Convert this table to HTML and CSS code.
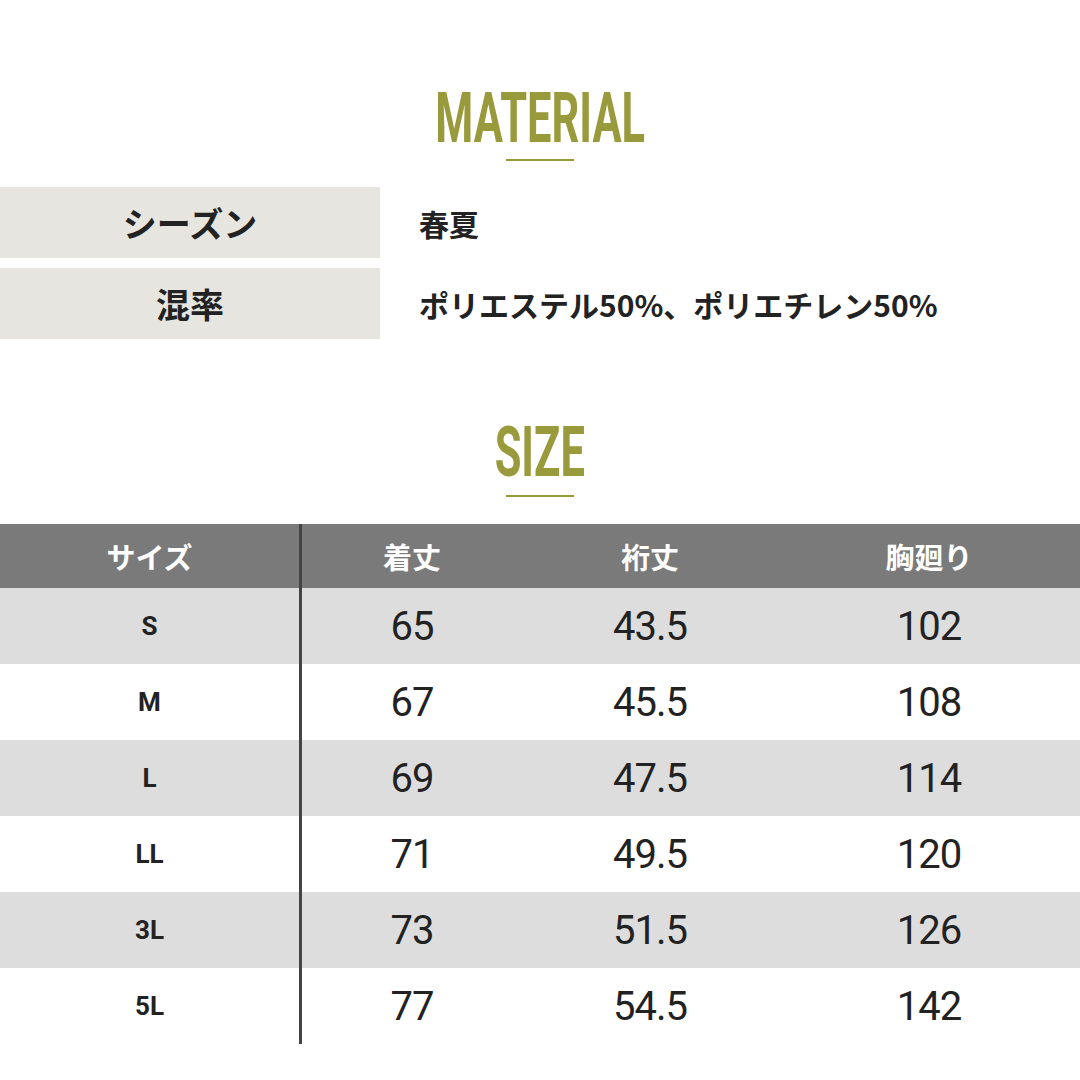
FILE: index.html
```html
<!DOCTYPE html>
<html lang="ja">
<head>
<meta charset="utf-8">
<link rel="stylesheet" href="styles.css">
</head>
<body>
<main class="page">
  <section class="material">
    <h2 class="title"><span>MATERIAL</span></h2>
    <div class="rule"></div>
    <div class="spec">
      <div class="spec-label">シーズン</div>
      <div class="spec-value">春夏</div>
      <div class="spec-label">混率</div>
      <div class="spec-value">ポリエステル50%、ポリエチレン50%</div>
    </div>
  </section>
  <section class="size">
    <h2 class="title"><span>SIZE</span></h2>
    <div class="rule"></div>
    <div class="table">
      <div class="row head">
        <div class="cell first">サイズ</div>
        <div class="cell">着丈</div>
        <div class="cell">裄丈</div>
        <div class="cell">胸廻り</div>
      </div>
      <div class="row shade">
        <div class="cell first">S</div>
        <div class="cell">65</div>
        <div class="cell">43.5</div>
        <div class="cell">102</div>
      </div>
      <div class="row">
        <div class="cell first">M</div>
        <div class="cell">67</div>
        <div class="cell">45.5</div>
        <div class="cell">108</div>
      </div>
      <div class="row shade">
        <div class="cell first">L</div>
        <div class="cell">69</div>
        <div class="cell">47.5</div>
        <div class="cell">114</div>
      </div>
      <div class="row">
        <div class="cell first">LL</div>
        <div class="cell">71</div>
        <div class="cell">49.5</div>
        <div class="cell">120</div>
      </div>
      <div class="row shade">
        <div class="cell first">3L</div>
        <div class="cell">73</div>
        <div class="cell">51.5</div>
        <div class="cell">126</div>
      </div>
      <div class="row">
        <div class="cell first">5L</div>
        <div class="cell">77</div>
        <div class="cell">54.5</div>
        <div class="cell">142</div>
      </div>
    </div>
  </section>
</main>
</body>
</html>
```

FILE: styles.css
```css
* { box-sizing: border-box; }
html, body { margin: 0; padding: 0; background: #ffffff; }
body {
  width: 1080px;
  height: 1080px;
  overflow: hidden;
  font-family: "Noto Sans CJK JP", "Noto Sans", sans-serif;
  color: #222222;
}
.page { padding-top: 83px; }

.title {
  margin: 0;
  font-family: Roboto, "Liberation Sans", sans-serif;
  font-weight: 700;
  font-size: 70px;
  line-height: 70px;
  color: #999a3b;
  text-align: center;
}
.title span {
  display: inline-block;
  transform: scaleX(0.62);
}
.rule {
  width: 68px;
  height: 2px;
  margin: 6px auto 0;
  background: #999a3b;
}
.size .rule { margin-top: 8px; }

.spec {
  margin-top: 26px;
  display: grid;
  grid-template-columns: 380px 1fr;
  grid-auto-rows: 71px;
  row-gap: 10px;
}
.spec-label {
  background: #e6e5df;
  display: flex;
  align-items: center;
  justify-content: center;
  font-weight: 700;
  font-size: 34px;
}
.spec-value {
  display: flex;
  align-items: center;
  padding-left: 39px;
  font-weight: 700;
  font-size: 30px;
}

.size { margin-top: 78px; }

.table { margin-top: 27px; }
.row {
  display: grid;
  grid-template-columns: 302px 220px 256px 302px;
  height: 76px;
}
.row.head {
  height: 64px;
  background: #7a7a7a;
  color: #ffffff;
}
.row.shade { background: #dddddd; }
.cell {
  display: flex;
  align-items: center;
  justify-content: center;
  font-family: Roboto, "Liberation Sans", sans-serif;
  font-size: 40px;
  letter-spacing: -1px;
  color: #222222;
}
.cell.first {
  border-right: 3px solid #444444;
  font-weight: 700;
  font-size: 26px;
  letter-spacing: 0;
}
.head .cell {
  font-family: "Noto Sans CJK JP", "Noto Sans", sans-serif;
  font-weight: 700;
  font-size: 29px;
  letter-spacing: 0;
  color: #ffffff;
}
```
